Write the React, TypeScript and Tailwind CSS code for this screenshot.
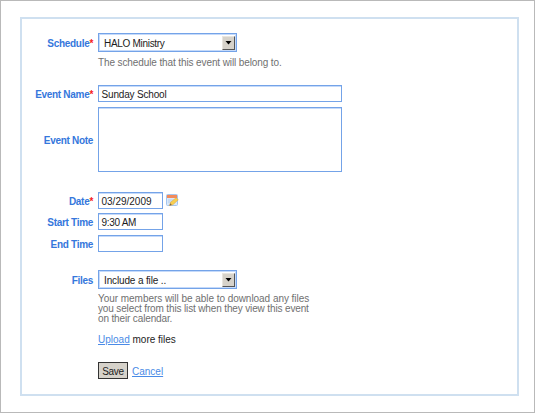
import type { ReactNode } from "react";

function Row({ label, required, className, children }: { label?: string; required?: boolean; className: string; children: ReactNode }) {
  return (
    <div className={`flex items-start ${className}`}>
      <div className="flex h-full w-[71px] shrink-0 items-center justify-end whitespace-nowrap pt-px font-bold tracking-[-0.3px] text-[#3577dc]">
        {label}
        {required && <span className="text-[#f52020]">*</span>}
      </div>
      <div className="ml-[5px] h-full">{children}</div>
    </div>
  );
}

function Select({ children }: { children: ReactNode }) {
  return (
    <div className="flex h-[19px] w-[139px] items-center justify-between border border-[#74a3e8] bg-white pl-[5px] pr-px shadow-[inset_0_0_0_1px_#c5dafa]">
      {children}
      <span className="flex h-[14px] w-[13px] items-center justify-center border border-b-[#555] border-l-[#e8e5df] border-r-[#555] border-t-[#e8e5df] bg-[#d6d2ca]">
        <svg width="7" height="4" viewBox="0 0 7 4"><path d="M0.5 0H6.5L3.5 3.5Z" fill="#000" /></svg>
      </span>
    </div>
  );
}

function Field({ value, className }: { value?: string; className: string }) {
  return <div className={`flex items-center whitespace-nowrap border border-[#74a3e8] bg-white pl-[2.5px] pt-px shadow-[inset_0_1px_0_#c5dafa] ${className}`}>{value}</div>;
}

function DateIcon() {
  return (
    <svg width="13" height="13" viewBox="0 0 13 13">
      <rect x="0.5" y="0.5" width="11" height="11" rx="1" fill="#d9e8fa" stroke="#a4c6ee" />
      <rect x="1" y="1" width="10" height="3" fill="#f28a5b" />
      <path d="M2 6H8M2 8H6" stroke="#b4cdea" />
      <path d="M3.5 11.5L4.6 8.3L10 3.8L12.3 5.8L6.8 10.8Z" fill="#f8cf50" stroke="#dba53c" strokeWidth="0.5" />
      <path d="M3.5 11.5L4.3 9.3L5.8 11Z" fill="#806548" />
    </svg>
  );
}

export default function App() {
  return (
    <div className="h-[413px] w-[535px] border border-[#b9b9b9] bg-white pl-[19px] pt-[16px] font-['Liberation_Sans',Arial,sans-serif] text-[10px] leading-[13px] text-[#1c1c1c]">
      <div className="h-[379px] w-[499px] border-2 border-[#cfe0f0] bg-white pt-[14px]">
        <Row label="Schedule" required className="h-[19px]"><Select><span className="whitespace-nowrap pt-px tracking-[-0.3px]">HALO Ministry</span></Select></Row>
        <Row className="mt-1 h-[13px]"><p className="whitespace-nowrap tracking-[-0.11px] text-[#707070]">The schedule that this event will belong to.</p></Row>
        <Row label="Event Name" required className="mt-4 h-[17px]"><Field value="Sunday School" className="h-[17px] w-[244px] tracking-[-0.17px]" /></Row>
        <Row label="Event Note" className="mt-[5px] h-[65px]"><Field className="h-[65px] w-[244px]" /></Row>
        <Row label="Date" required className="mt-5 h-[17px]">
          <div className="flex items-center gap-[3px]"><Field value="03/29/2009" className="h-[17px] w-[65px]" /><DateIcon /></div>
        </Row>
        <Row label="Start Time" className="mt-1 h-[17px]"><Field value="9:30 AM" className="h-[17px] w-[65px] tracking-[-0.3px]" /></Row>
        <Row label="End Time" className="mt-[5px] h-[17px]"><Field className="h-[17px] w-[65px]" /></Row>
        <Row label="Files" className="mt-[18px] h-[19px]"><Select><span className="whitespace-nowrap pt-px tracking-[-0.14px]">Include a file ..</span></Select></Row>
        <Row className="mt-[5px] h-[30px]">
          <p className="whitespace-nowrap leading-[10px] tracking-[-0.14px] text-[#707070]"><span className="tracking-[-0.04px]">Your members will be able to download any files</span><br />you select from this list when they view this event<br />on their calendar.</p>
        </Row>
        <Row className="mt-[9px] h-[13px]"><p><a className="text-[#4a8be6] underline">Upload</a> <span>more files</span></p></Row>
        <Row className="mt-[16px] h-[17px]">
          <div className="flex items-center gap-1">
            <button className="flex h-[17px] w-[30px] items-center justify-center border border-[#333] bg-[#d6d2ca] pt-px tracking-[-0.3px]">Save</button>
            <a className="pt-px text-[#4a8be6] underline">Cancel</a>
          </div>
        </Row>
      </div>
    </div>
  );
}
